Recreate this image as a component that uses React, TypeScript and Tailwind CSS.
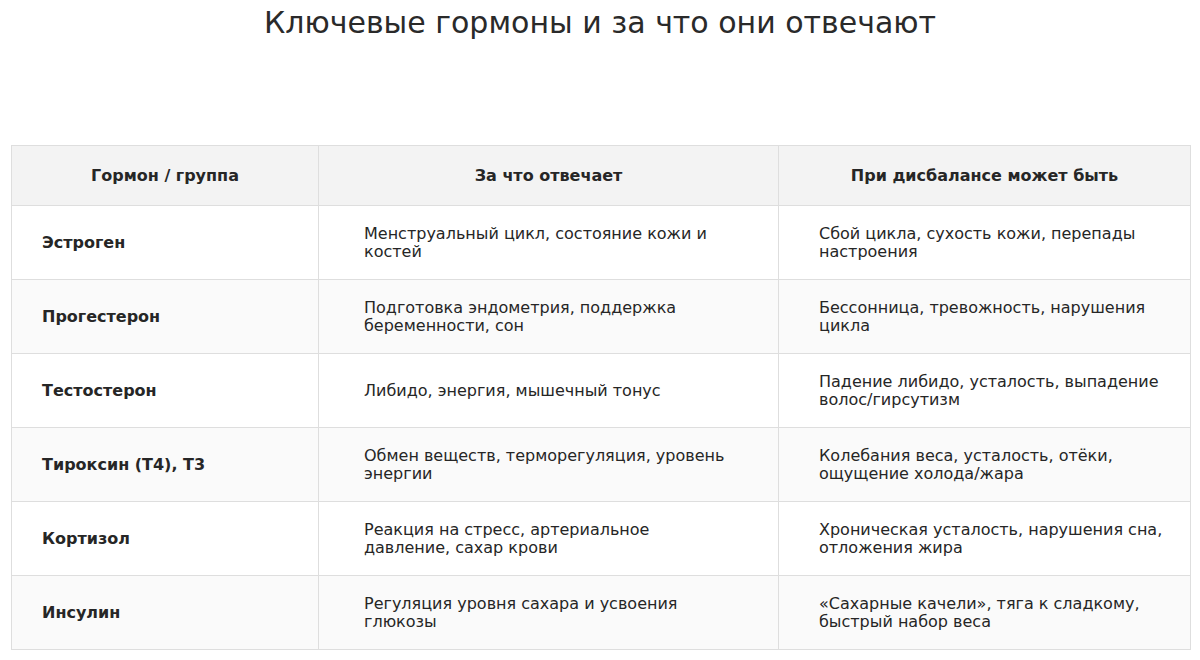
const rows = [
  ["Эстроген", "Менструальный цикл, состояние кожи и костей", "Сбой цикла, сухость кожи, перепады настроения"],
  ["Прогестерон", "Подготовка эндометрия, поддержка беременности, сон", "Бессонница, тревожность, нарушения цикла"],
  ["Тестостерон", "Либидо, энергия, мышечный тонус", "Падение либидо, усталость, выпадение волос/гирсутизм"],
  ["Тироксин (T4), T3", "Обмен веществ, терморегуляция, уровень энергии", "Колебания веса, усталость, отёки, ощущение холода/жара"],
  ["Кортизол", "Реакция на стресс, артериальное давление, сахар крови", "Хроническая усталость, нарушения сна, отложения жира"],
  ["Инсулин", "Регуляция уровня сахара и усвоения глюкозы", "«Сахарные качели», тяга к сладкому, быстрый набор веса"],
];

function App() {
  return (
    <div className="w-[1200px] h-[660px] bg-white overflow-hidden font-['DejaVu_Sans',sans-serif] text-[#262626]">
      <h1 className="pt-[5px] text-center text-[30px] leading-[36px] text-[#2a2a2a]">
        Ключевые гормоны и за что они отвечают
      </h1>
      <div className="px-[11px] pt-[104px]">
        <table className="w-[1179px] table-fixed border-collapse border border-[#dedede]">
          <colgroup>
            <col className="w-[307px]" />
            <col className="w-[460px]" />
            <col className="w-[412px]" />
          </colgroup>
          <thead>
            <tr className="h-[60px] bg-[#f3f3f3] text-[16px] font-bold">
              <th className="border border-[#dedede] text-center">Гормон / группа</th>
              <th className="border border-[#dedede] text-center">За что отвечает</th>
              <th className="border border-[#dedede] text-center">При дисбалансе может быть</th>
            </tr>
          </thead>
          <tbody>
            {rows.map((r, i) => (
              <tr key={r[0]} className={`h-[74px] text-[16px] leading-[18px] ${i % 2 ? "bg-[#fafafa]" : "bg-white"}`}>
                <td className="border border-[#dedede] pl-[30px] pr-4 font-bold align-middle">{r[0]}</td>
                <td className="border border-[#dedede] pl-[45px] pr-[40px] align-middle">{r[1]}</td>
                <td className="border border-[#dedede] pl-[40px] pr-[25px] align-middle">{r[2]}</td>
              </tr>
            ))}
          </tbody>
        </table>
      </div>
    </div>
  );
}

export default App;
